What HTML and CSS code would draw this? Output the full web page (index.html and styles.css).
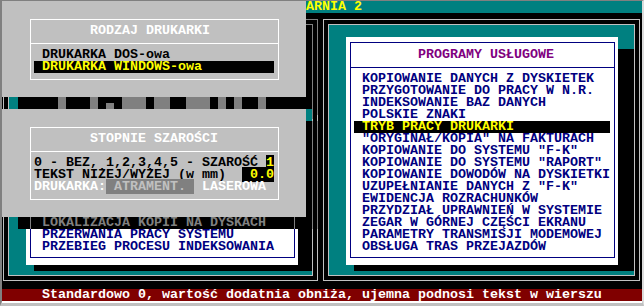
FILE: index.html
```html
<!DOCTYPE html>
<html lang="pl">
<head>
    <meta charset="UTF-8">
    <title>Programy usługowe</title>
    <link rel="stylesheet" href="styles.css">
</head>
<body>
<div class="win">
    <div class="screen">
        <div class="topbar">ARNIA 2</div>
        <div class="desk">
            <div class="panel panel-left">
                <div class="frame"><div class="frame-in">
                    <div class="dlg dlg-left">
                        <div class="box">
                            <ul class="items items-end">
                                <li class="sel">LOKALIZACJA KOPII NA DYSKACH</li>
                                <li>PRZERWANIA PRACY SYSTEMU</li>
                                <li>PRZEBIEG PROCESU INDEKSOWANIA</li>
                            </ul>
                        </div>
                    </div>
                </div></div>
            </div>
            <div class="panel panel-right">
                <div class="frame"><div class="frame-in">
                    <div class="dlg dlg-right">
                        <div class="box">
                            <div class="box-title">PROGRAMY USŁUGOWE</div>
                            <ul class="items">
                                <li>KOPIOWANIE DANYCH Z DYSKIETEK</li>
                                <li>PRZYGOTOWANIE DO PRACY W N.R.</li>
                                <li>INDEKSOWANIE BAZ DANYCH</li>
                                <li>POLSKIE ZNAKI</li>
                                <li class="sel">TRYB PRACY DRUKARKI</li>
                                <li>"ORYGINAŁ/KOPIA" NA FAKTURACH</li>
                                <li>KOPIOWANIE DO SYSTEMU "F-K"</li>
                                <li>KOPIOWANIE DO SYSTEMU "RAPORT"</li>
                                <li>KOPIOWANIE DOWODÓW NA DYSKIETKI</li>
                                <li>UZUPEŁNIANIE DANYCH Z "F-K"</li>
                                <li>EWIDENCJA ROZRACHUNKÓW</li>
                                <li>PRZYDZIAŁ UPRAWNIEŃ W SYSTEMIE</li>
                                <li>ZEGAR W GÓRNEJ CZĘŚCI EKRANU</li>
                                <li>PARAMETRY TRANSMISJI MODEMOWEJ</li>
                                <li>OBSŁUGA TRAS PRZEJAZDÓW</li>
                            </ul>
                        </div>
                    </div>
                </div></div>
            </div>
        </div>
        <div class="status">Standardowo 0, wartość dodatnia obniża, ujemna podnosi tekst w wierszu</div>

        <!-- okno: rodzaj drukarki -->
        <div class="gdlg gdlg-1">
            <div class="gbox">
                <div class="gbox-title">RODZAJ DRUKARKI</div>
                <ul class="opts">
                    <li>DRUKARKA DOS-owa</li>
                    <li class="sel">DRUKARKA WINDOWS-owa</li>
                </ul>
            </div>
        </div>
        <div class="shade shade-1r">
            <div class="ln-o ln-top"><div class="ln-i ln-top"></div></div>
        </div>
        <div class="shade shade-1b">
            <i class="c5"></i><b class="c1"></b><i class="c3"></i><b class="c1"></b><i class="c1"></i><b class="c1 half"></b><i class="c1"></i><b class="c3"></b><i class="c1"></i><b class="c2"></b><i class="c2"></i><b class="c3"></b><i class="c1"></i><b class="c1"></b><i class="c1"></i><b class="c1"></b><i class="c2"></i><b class="c1"></b>
        </div>

        <!-- okno: stopnie szarosci -->
        <div class="gdlg gdlg-2">
            <div class="gbox">
                <div class="gbox-title">STOPNIE SZAROŚCI</div>
                <div class="fields">
                    <div class="row">0 - BEZ, 1,2,3,4,5 - SZAROŚĆ <span class="fld">1</span></div>
                    <div class="row">TEKST NIŻEJ/WYŻEJ (w mm)  <span class="fld"> 0.0</span></div>
                    <div class="row"><span class="lbl">DRUKARKA:</span><span class="dim"> ATRAMENT. </span><span class="lbl"> LASEROWA</span></div>
                </div>
            </div>
        </div>
        <div class="shade shade-2r">
            <div class="ln-o"><div class="ln-i"></div></div>
        </div>
        <div class="shade shade-2b">
            <div class="shade-box">LOKALIZACJA KOPII NA DYSKACH</div>
        </div>
    </div>
</div>
</body>
</html>
```

FILE: styles.css
```css
*{
    margin: 0;
    padding: 0;
    box-sizing: border-box;
    list-style: none;
}
body{
    background-color: #c0c0c0;
    font-family: "Liberation Mono", "DejaVu Sans Mono", monospace;
    font-size: 13.333px;
    font-weight: bold;
    line-height: 12px;
}
.win{
    width: 644px;
    height: 306px;
    border-top: 1px solid #808080;
    border-left: 2px solid #808080;
    border-right: 2px solid #dcdcdc;
    border-bottom: 5px solid #c0c0c0;
}
.screen{
    position: relative;
    width: 640px;
    height: 300px;
    background-color: #000;
    display: flex;
    flex-direction: column;
    overflow: hidden;
    box-shadow: 0 2px 0 #ffffff;
}
.topbar{
    height: 12px;
    background-color: #008080;
    color: #ffff00;
    padding-left: 304px;
    white-space: pre;
}
.desk{
    display: flex;
    height: 276px;
}
.panel{
    width: 320px;
    display: flex;
}
.panel-left{
    padding: 6px 4px 8px 1px;
}
.panel-right{
    padding: 6px 2px 8px 1px;
}
.frame{
    flex: 1;
    display: flex;
    border: 1px solid #c0c0c0;
    padding: 4px;
}
.frame-in{
    flex: 1;
    border: 1px solid #c0c0c0;
    background-color: #008080;
    padding: 12px 0 0 17px;
    overflow: hidden;
}
.status{
    height: 12px;
    background-color: #800000;
    color: #fff;
    padding-left: 40px;
    white-space: pre;
}

/* okna biale */
.dlg{
    position: relative;
    width: 272px;
    background-color: #fff;
    padding: 5px 3px 7px 4px;
    display: flex;
}
.dlg-right{
    height: 228px;
}
.dlg-left{
    height: 144px;
    margin-top: 84px;
}
.dlg::before{
    content: "";
    position: absolute;
    left: 100%;
    top: 12px;
    bottom: -6px;
    width: 16px;
    background-color: #000;
}
.dlg::after{
    content: "";
    position: absolute;
    top: 100%;
    left: 8px;
    right: -16px;
    height: 6px;
    background-color: #000;
}
.box{
    flex: 1;
    border: 1px solid #000080;
    display: flex;
    flex-direction: column;
    color: #000080;
}
.box-title{
    color: #800080;
    padding: 6px 0 6px 67px;
    border-bottom: 1px solid #000080;
    white-space: pre;
}
.items{
    flex: 1;
    padding: 5px 4px 0 3px;
}
.items li{
    height: 12px;
    padding-left: 8px;
    white-space: pre;
}
.items .sel{
    background-color: #000;
    color: #ffff00;
}
.items-end{
    display: flex;
    flex-direction: column;
    justify-content: flex-end;
    padding-bottom: 4px;
}

/* okna szare */
.gdlg{
    position: absolute;
    left: 0;
    width: 304px;
    background-color: #c0c0c0;
    padding: 18px 27px 17px 28px;
    display: flex;
    color: #000;
}
.gdlg-1{
    top: 0;
    height: 96px;
}
.gdlg-2{
    top: 108px;
    height: 108px;
}
.gbox{
    flex: 1;
    border: 1px solid #fff;
    display: flex;
    flex-direction: column;
}
.gbox-title{
    color: #fff;
    padding: 5px 0 6px 59px;
    border-bottom: 1px solid #fff;
    white-space: pre;
}
.opts{
    padding: 5px 4px 0 3px;
}
.opts li{
    height: 12px;
    padding-left: 8px;
    white-space: pre;
}
.opts .sel{
    background-color: #000;
    color: #ffff00;
}
.fields{
    padding: 5px 0 0 3px;
}
.row{
    height: 12px;
    white-space: pre;
}
.fld{
    background-color: #000;
    color: #ffff00;
}
.lbl{
    color: #fff;
}
.dim{
    background-color: #808080;
    color: #c0c0c0;
}

/* cienie */
.shade{
    position: absolute;
    background-color: #000;
    color: #808080;
}
.shade-1r{
    left: 304px;
    top: 12px;
    width: 16px;
    height: 96px;
}
.shade-2r{
    left: 304px;
    top: 120px;
    width: 16px;
    height: 108px;
}
.ln-o{
    width: 12px;
    height: 100%;
    border-right: 1px solid #808080;
}
.ln-i{
    width: 7px;
    height: 100%;
    border-right: 1px solid #808080;
}
.ln-o.ln-top{
    margin-top: 6px;
    border-top: 1px solid #808080;
}
.ln-i.ln-top{
    margin-top: 4px;
    border-top: 1px solid #808080;
}
.shade-1b{
    left: 16px;
    top: 96px;
    width: 288px;
    height: 12px;
    display: flex;
}
.shade-1b i,
.shade-1b b{
    display: block;
    height: 12px;
}
.shade-1b b{
    background-color: #808080;
}
.shade-1b b.half{
    height: 6px;
    margin-top: 6px;
}
.c1{ width: 8px; }
.c2{ width: 16px; }
.c3{ width: 24px; }
.c5{ width: 40px; }
.shade-2b{
    left: 16px;
    top: 216px;
    width: 288px;
    height: 12px;
    padding-left: 12px;
}
.shade-box{
    width: 265px;
    height: 12px;
    border-left: 1px solid #808080;
    border-right: 1px solid #808080;
    padding-left: 11px;
    white-space: pre;
}
```
